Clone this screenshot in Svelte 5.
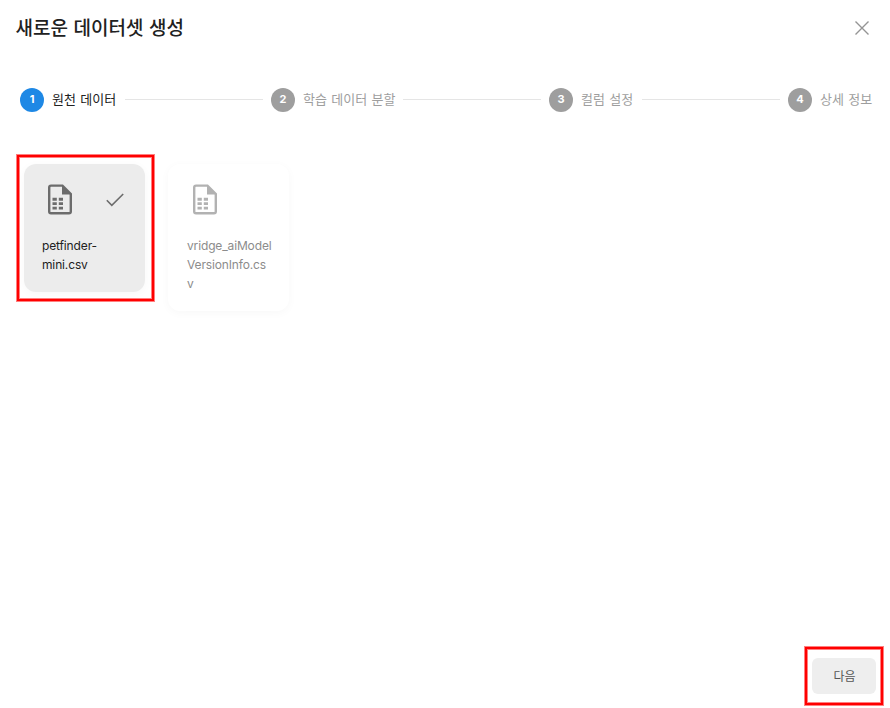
<script>
  const steps = [
    { label: '원천 데이터', width: 65 },
    { label: '학습 데이터 분할', width: 92 },
    { label: '컬럼 설정', width: 53 },
    { label: '상세 정보', width: 53 },
  ];
  const files = [
    { name: 'petfinder-\nmini.csv', selected: true },
    { name: 'vridge_aiModel\nVersionInfo.cs\nv', selected: false },
  ];
</script>

<main>
  <header>
    <h1>새로운 데이터셋 생성</h1>
    <button class="close" aria-label="닫기">
      <svg width="16" height="16" viewBox="0 0 16 16"><path d="M1.5 1.5 14.5 14.5M14.5 1.5 1.5 14.5" /></svg>
    </button>
  </header>

  <nav>
    {#each steps as step, i}
      {#if i > 0}<span class="line"></span>{/if}
      <div class="step" class:active={i === 0}>
        <span class="num">{i + 1}</span>
        <span class="label" style="width: {step.width}px">{step.label}</span>
      </div>
    {/each}
  </nav>

  <section>
    {#each files as file}
      <div class="frame" class:marked={file.selected}>
        <article class:selected={file.selected}>
          <div class="icons">
            <svg class="sheet" width="24" height="31" viewBox="0 0 24 31">
              <g transform="translate(0 .4)">
                <path class="outline" d="M3 1.2H14.5L22.8 9.5V27Q22.8 28.8 21 28.8H3Q1.2 28.8 1.2 27V3Q1.2 1.2 3 1.2Z" />
                <path d="M14 1 23 10H14Z" />
                <path d="M4.5 13.3H8.8V16.3H4.5ZM10.8 13.3H15V16.3H10.8ZM4.5 17.9H8.8V20.6H4.5ZM10.8 17.9H15V20.6H10.8ZM4.5 22.3H8.8V25.2H4.5ZM10.8 22.3H15V25.2H10.8Z" />
              </g>
            </svg>
            {#if file.selected}
              <svg class="check" width="18" height="14" viewBox="0 0 18 14"><path d="M.8 7.3 5.8 12.4 17.2 1" /></svg>
            {/if}
          </div>
          <p>{file.name}</p>
        </article>
      </div>
    {/each}
  </section>

  <footer>
    <div class="action marked"><button class="next">다음</button></div>
  </footer>
</main>

<style>
  :global(body) { background: #fff; }
  main {
    box-sizing: border-box;
    width: 890px;
    height: 708px;
    display: flex;
    flex-direction: column;
    overflow: hidden;
    background: #fff;
    font-family: Inter, "Noto Sans CJK KR", sans-serif;
  }
  button { border: 0; padding: 0; font-family: inherit; }
  svg { display: block; }
  header {
    height: 56px;
    flex: none;
    display: flex;
    align-items: center;
    justify-content: space-between;
    padding: 0 20px 0 15.5px;
  }
  h1 {
    margin: 0 0 2px;
    font: 500 19px/28px "Noto Sans CJK KR", sans-serif;
    word-spacing: 1.3px;
    color: #212121;
    white-space: nowrap;
  }
  .close { background: none; }
  .close path { fill: none; stroke: #949494; stroke-width: 1.4; }
  nav {
    flex: none;
    display: flex;
    align-items: center;
    height: 24px;
    margin: 32px 17px 0 20px;
  }
  .step { display: flex; align-items: center; gap: 8px; flex: none; }
  .num {
    width: 24px;
    height: 24px;
    border-radius: 50%;
    background: #9e9e9e;
    color: #fff;
    font-size: 11px;
    font-weight: 700;
    line-height: 23px;
    text-align: center;
  }
  .label {
    margin-bottom: 2px;
    font: 400 13px/22px "Noto Sans CJK KR", sans-serif;
    word-spacing: 1.4px;
    color: #9e9e9e;
    white-space: nowrap;
  }
  .active .num { background: #1e88e5; }
  .active .label { color: #212121; }
  .line { flex: 1; height: 1px; margin: 0 8px 1px; background: #e5e5e5; }
  section {
    flex: 1;
    display: flex;
    align-items: flex-start;
    padding: 43px 17px 0;
    gap: 7px;
  }
  .frame { border: 2px solid transparent; padding: 7px 7px 7px 5px; }
  .marked {
    border: 2px solid #f00;
    box-shadow: 0 0 0 1px rgba(255, 0, 0, 0.5), inset 0 0 0 1px rgba(255, 0, 0, 0.5);
  }
  article {
    box-sizing: border-box;
    width: 121px;
    padding: 20px 17px 18px 18px;
    border-radius: 12px;
    background: #fff;
    box-shadow: 0 2px 10px rgba(0, 0, 0, 0.03);
    color: #8c8c8c;
  }
  .frame:not(.marked) article { padding-left: 19px; }
  .selected { background: #ececec; color: #212121; }
  .icons {
    display: flex;
    align-items: center;
    justify-content: space-between;
    height: 31px;
    padding: 0 4px 0 6px;
  }
  .sheet { fill: #b2b2b2; }
  .selected .sheet { fill: #6c6c6c; }
  .sheet .outline { fill: none; stroke: #b2b2b2; stroke-width: 2.4; }
  .selected .sheet .outline { stroke: #6c6c6c; }
  .check { fill: none; stroke: #6c6c6c; stroke-width: 1.6; }
  p {
    margin: 21px 0 0;
    font-size: 12px;
    line-height: 19px;
    letter-spacing: -0.14px;
    white-space: pre;
  }
  footer {
    flex: none;
    display: flex;
    justify-content: flex-end;
    padding: 0 7px 3px 0;
  }
  .action { padding: 9px 5px; }
  .next {
    display: block;
    width: 64px;
    height: 36px;
    padding: 0 0 1px 1px;
    border-radius: 6px;
    background: #eee;
    color: #555;
    font: 400 12px/34px "Noto Sans CJK KR", sans-serif;
  }
</style>
